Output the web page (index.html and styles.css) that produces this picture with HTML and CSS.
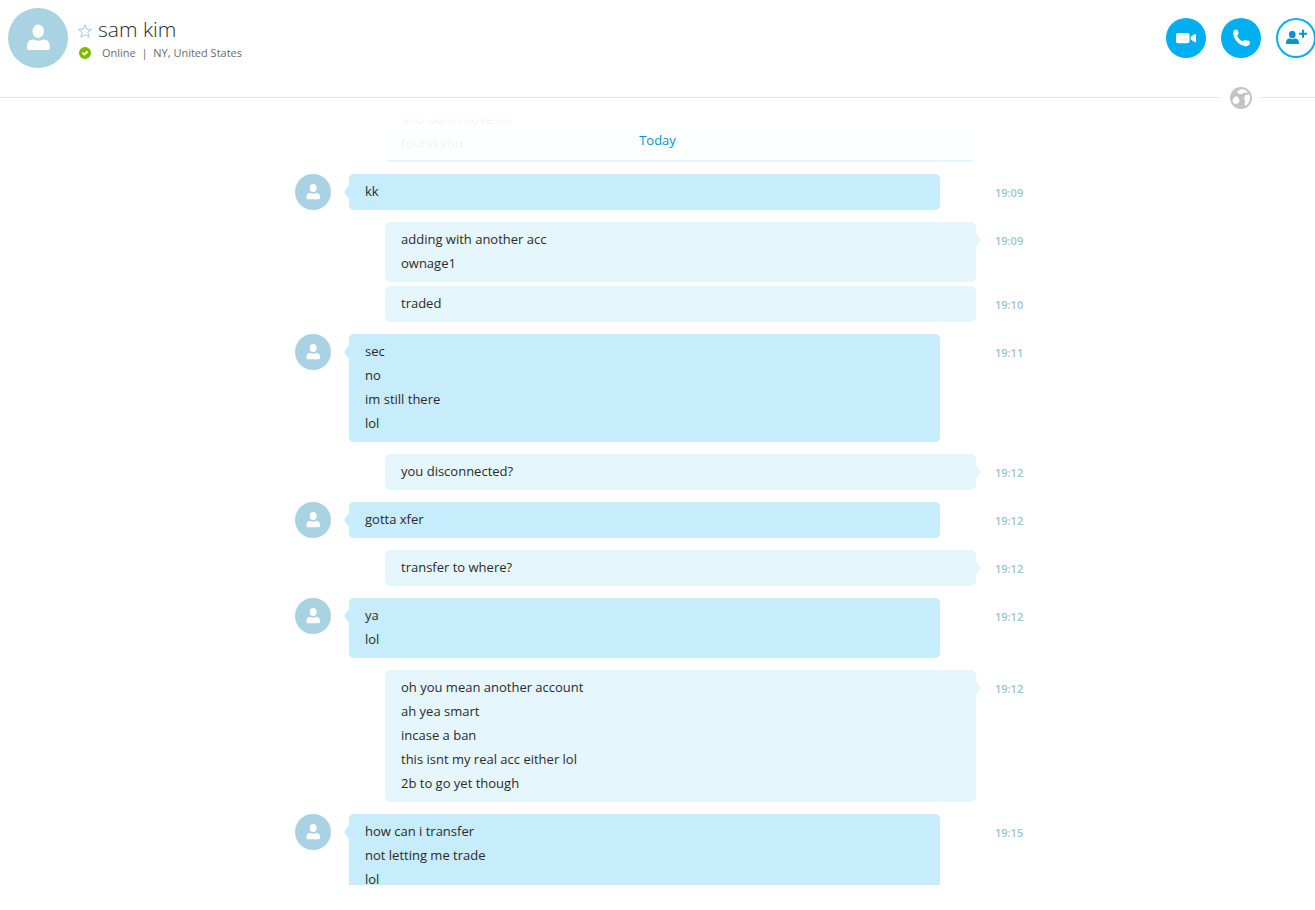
FILE: index.html
```html
<!DOCTYPE html>
<html lang="en">
<head>
    <meta charset="UTF-8">
    <meta name="viewport" content="width=device-width, initial-scale=1.0">
    <title>sam kim</title>
    <link rel="stylesheet" href="styles.css">
</head>
<body>
    <svg class="symbols" aria-hidden="true">
        <symbol id="person" viewBox="0 0 60 60">
            <ellipse cx="30.3" cy="23.3" rx="5.7" ry="6.7"/>
            <path d="M19 40c0-5.500 1.500-8.500 6-8.500 2 0 2.500 1.300 5.300 1.300s3.300-1.300 5.300-1.300c4.500 0 6.400 3 6.400 8.500 0 1.200-.8 2-2 2H21c-1.200 0-2-.8-2-2z"/>
        </symbol>
    </svg>
    <header class="header">
        <svg class="avatar avatar-big"><use href="#person"/></svg>
        <div class="contact">
            <div class="contact-row">
                <button class="star" aria-label="Add to favourites">
                    <svg width="14" height="14" viewBox="0 0 14 14"><path d="M7 .8l1.700 4.300 4.800.3-3.700 2.900 1.300 4.900L7 10.500 2.900 13.200l1.300-4.900L.5 5.400l4.800-.3z"/></svg>
                </button>
                <h1>sam kim</h1>
            </div>
            <div class="contact-row status">
                <svg width="12" height="12" viewBox="0 0 12 12"><circle cx="6" cy="6" r="6"/><path d="M3.300 5.800l2 1.700 3.300-3"/></svg>
                <span>Online&nbsp; |&nbsp; NY, United States</span>
            </div>
        </div>
        <div class="actions">
            <button class="action" aria-label="Video call">
                <svg width="40" height="40" viewBox="0 0 40 40"><rect x="10" y="15" width="13.500" height="10.200" rx="2"/><path d="M24.700 18.700l3.800-2.400c.8-.5 1.500-.3 1.500.5v6.600c0 .8-.7 1-1.500.5l-3.800-2.400z"/></svg>
            </button>
            <button class="action" aria-label="Call">
                <svg width="40" height="40" viewBox="0 0 40 40"><path d="M12.300 14.200c.5-2.200 3.300-3.400 4.300-2l.9 2.600c.4 1.300-.8 1.700-1.100 2.500-.3.800 1.300 3.500 2.900 4.700 1.500 1.100 2.100 1.400 2.800.9.700-.5 1.200-.9 2-.6l3.600.5c1.700.4 1.800 3.800-.9 5.200-2.300.9-6.700-.4-9.700-3.200-3.200-3-5.200-7.600-4.800-10.600z"/></svg>
            </button>
            <button class="action outline" aria-label="Add people">
                <svg width="40" height="40" viewBox="0 0 40 40"><ellipse cx="16.300" cy="16.500" rx="3.300" ry="3.800"/><path d="M10 25.500c0-3.500 1.200-5 3.800-5 1 0 1.300.7 2.600.7s1.600-.7 2.600-.7c2.700 0 4 1.500 4 5 0 .3-.3.500-.6.500H10.600c-.3 0-.6-.2-.6-.5z"/><path class="plus" d="M23 15.800h8M27 11.800v8"/></svg>
            </button>
        </div>
    </header>
    <div class="divider">
        <svg width="22" height="22" viewBox="0 0 22 22"><circle cx="11" cy="11" r="11"/><path d="M9 3c2.500-1.300 5.500-1 7.500.7l1.500 1.800-3 .6-1.500-.7-1 1.600H8.500L7 5zM15.500 8l4-.5c1.200 3.200.6 6.600-1.500 9.200l-2.800 2.300c-.8-1.500-.5-3.500 0-5l-1.200-2.500zM2.500 13.500c.3-2 2-3.500 4-4.500l2 1.700 1 2.500-.5 2.300-2.300 1.500-2.400-.3c-1-.8-1.700-1.900-1.800-3.200z"/></svg>
    </div>
    <main class="chat">
        <div class="date">Today</div>
        <div class="messages">
            <div class="message mine">
                <div class="bubble first">
                    <p>and dont move lol</p>
                    <p>found you</p>
                </div>
            </div>
            <div class="message">
                <svg class="avatar"><use href="#person"/></svg>
                <div class="bubble first">
                    <p>kk</p>
                </div>
                <time>19:09</time>
            </div>
            <div class="message mine">
                <div class="bubble first">
                    <p>adding with another acc</p>
                    <p>ownage1</p>
                </div>
                <time>19:09</time>
            </div>
            <div class="message mine next">
                <div class="bubble">
                    <p>traded</p>
                </div>
                <time>19:10</time>
            </div>
            <div class="message">
                <svg class="avatar"><use href="#person"/></svg>
                <div class="bubble first">
                    <p>sec</p>
                    <p>no</p>
                    <p>im still there</p>
                    <p>lol</p>
                </div>
                <time>19:11</time>
            </div>
            <div class="message mine">
                <div class="bubble first">
                    <p>you disconnected?</p>
                </div>
                <time>19:12</time>
            </div>
            <div class="message">
                <svg class="avatar"><use href="#person"/></svg>
                <div class="bubble first">
                    <p>gotta xfer</p>
                </div>
                <time>19:12</time>
            </div>
            <div class="message mine">
                <div class="bubble first">
                    <p>transfer to where?</p>
                </div>
                <time>19:12</time>
            </div>
            <div class="message">
                <svg class="avatar"><use href="#person"/></svg>
                <div class="bubble first">
                    <p>ya</p>
                    <p>lol</p>
                </div>
                <time>19:12</time>
            </div>
            <div class="message mine">
                <div class="bubble first">
                    <p>oh you mean another account</p>
                    <p>ah yea smart</p>
                    <p>incase a ban</p>
                    <p>this isnt my real acc either lol</p>
                    <p>2b to go yet though</p>
                </div>
                <time>19:12</time>
            </div>
            <div class="message">
                <svg class="avatar"><use href="#person"/></svg>
                <div class="bubble first">
                    <p>how can i transfer</p>
                    <p>not letting me trade</p>
                    <p>lol</p>
                </div>
                <time>19:15</time>
            </div>
        </div>
    </main>
</body>
</html>
```

FILE: styles.css
```css
* { box-sizing: border-box; }
body { display: flex; flex-direction: column; height: 100vh; margin: 0; padding-bottom: 25px; overflow: hidden; background: #fff; color: #2b2b2b; font-family: "Open Sans", sans-serif; font-size: 13px; }
h1, p { margin: 0; }
svg { display: block; flex: none; }
button { padding: 0; border: none; background: none; cursor: pointer; }
.symbols { position: absolute; width: 0; height: 0; }

.avatar { width: 36px; height: 36px; border-radius: 50%; background: #a9d3e2; fill: #fff; }
.avatar-big { width: 60px; height: 60px; }

.header { display: flex; flex: none; height: 87px; padding: 8px 0 0 8px; }
.contact { flex: 1; padding: 6px 0 0 10px; }
.contact-row { display: flex; align-items: center; gap: 6px; height: 30px; }
.contact h1 { font-size: 21px; font-weight: 300; line-height: 30px; }
.star { margin-top: 3px; }
.star svg { fill: none; stroke: #a0cbdc; }
.status { gap: 11px; height: 17px; padding-left: 1px; color: #6b6b6b; font-size: 11px; line-height: 18px; }
.status circle { fill: #7fba00; }
.status path { fill: none; stroke: #fff; stroke-width: 2; }
.actions { display: flex; gap: 15px; margin-right: -1px; padding-top: 10px; }
.action { width: 40px; height: 40px; border-radius: 50%; background: #00aff0; fill: #fff; }
.outline { background: #fff; box-shadow: inset 0 0 0 2px #00aff0; fill: #0095cc; }
.plus { stroke: #0095cc; stroke-width: 2; }

.divider { display: flex; flex: none; gap: 9px; height: 22px; }
.divider::before, .divider::after { content: ""; height: 1px; margin-top: 10px; background: #e5e7e8; }
.divider::before { flex: 1; }
.divider::after { width: 54px; }
.divider circle { fill: #c4c4c6; }
.divider path { fill: #fff; }

.chat { position: relative; flex: 1; min-height: 0; margin-top: 10px; overflow: hidden; }
.date { position: absolute; z-index: 1; top: 0; left: 0; right: 0; height: 41px; padding-top: 9px; background: rgba(255, 255, 255, 0.94); color: #0095cc; line-height: 24px; text-align: center; }
.messages { max-width: 729px; margin: -17px auto 0; padding-left: 2px; }
.message { display: flex; align-items: flex-start; margin-bottom: 12px; }
.bubble { position: relative; flex: 1; margin: 0 55px 0 18px; padding: 5px 16px 7px; border-radius: 5px; background: #c7ecfc; line-height: 24px; }
.mine .bubble { margin: 0 19px 0 90px; background: #e5f6fd; }
.next { margin-top: -8px; }
.first::before { content: ""; position: absolute; top: 11px; left: -5px; border: solid transparent; border-width: 7px 5px 7px 0; border-right-color: #c7ecfc; }
.mine .first::before { left: auto; right: -5px; border-width: 7px 0 7px 5px; border-left-color: #e5f6fd; }
time { width: 27px; padding-top: 7px; color: #98c4d6; font-size: 11px; font-weight: 600; line-height: 24px; white-space: nowrap; }
.mine:first-child { padding-right: 27px; }
```
